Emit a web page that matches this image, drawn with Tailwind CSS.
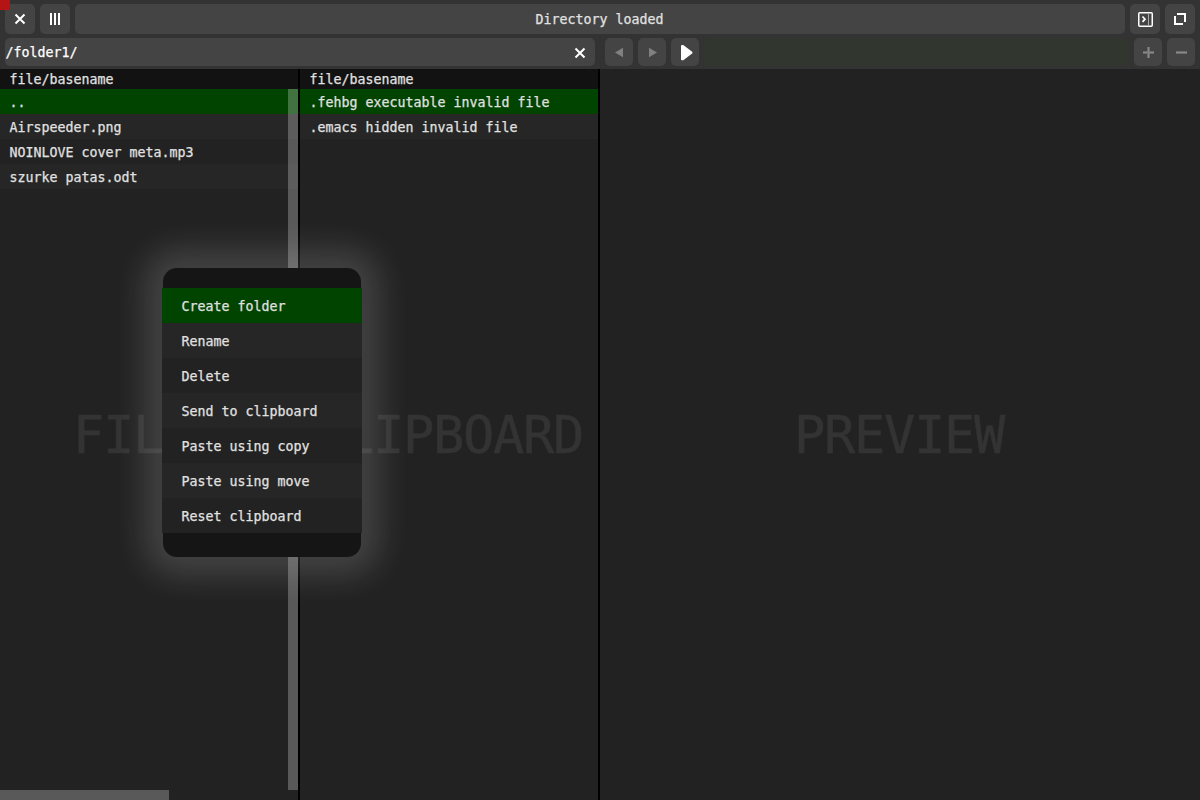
<!DOCTYPE html>
<html lang="en">
<head>
<meta charset="utf-8">
<title>File browser</title>
<script src="https://cdn.jsdelivr.net/npm/@tailwindcss/browser@4"></script>
</head>
<body class="h-[800px] w-[1200px] overflow-hidden bg-[#222] font-['DejaVu_Sans_Mono',monospace] text-[13.29px] text-[#e1e1e1] [-webkit-text-stroke:0.25px_currentColor]">
<div class="relative flex h-full flex-col">
  <header class="flex h-[69px] shrink-0 flex-col gap-1 bg-[#333] px-[5px] pt-1">
    <div class="flex h-[30px] gap-[5px]">
      <div class="w-[30px] rounded-[5px] bg-[#444]"><svg width="30" height="30" fill="none" stroke="#fff" stroke-width="2"><path d="M10.500 10.500l9 9M19.500 10.500l-9 9"/></svg></div>
      <div class="w-[30px] rounded-[5px] bg-[#444]"><svg width="30" height="30" fill="#fff"><path d="M10 9h2v12h-2zM14 9h2v12h-2zM18 9h2v12h-2z"/></svg></div>
      <div class="flex-1 rounded-[5px] bg-[#444] pr-px text-center leading-[31px] whitespace-nowrap">Directory loaded</div>
      <div class="w-[30px] rounded-[5px] bg-[#444]"><svg width="30" height="30" fill="none" stroke="#fff"><rect x="8.750" y="8.750" width="13.500" height="13.500" rx="1" stroke-width="1.500"/><path d="M18.500 9.500v12" stroke="#aaa"/><path d="M12.500 12.500l2.500 2.700-2.500 2.700" stroke-width="1.700"/></svg></div>
      <div class="w-[30px] rounded-[5px] bg-[#444]"><svg width="30" height="30" fill="none" stroke="#fff" stroke-width="2"><path d="M12 10h8v8M10 12v8h8"/></svg></div>
    </div>
    <div class="flex h-7 gap-[5px]">
      <div class="mr-[5px] flex w-[590px] justify-between rounded-[5px] bg-[#444] leading-[29px] text-white"><span class="pl-[0.5px]">/folder1/</span><svg width="30" height="28" fill="none" stroke="#fff" stroke-width="2"><path d="M10.500 10.500l9 9M19.500 10.500l-9 9"/></svg></div>
      <div class="w-7 rounded-[5px] bg-[#444]"><svg width="28" height="28" fill="#808080"><path d="M10 14.500L18 9.700v9.600z"/></svg></div>
      <div class="w-7 rounded-[5px] bg-[#444]"><svg width="28" height="28" fill="#808080"><path d="M11 9.700v9.600l8-4.800z"/></svg></div>
      <div class="w-7 rounded-[5px] bg-[#444]"><svg width="28" height="28" fill="#fff" stroke="#fff" stroke-linejoin="round" stroke-width="2"><path d="M11 8v13.200l1 0L20.500 14.600L12 8z"/></svg></div>
      <div class="flex-1 rounded-[5px] bg-[#31362f]"></div>
      <div class="w-7 rounded-[5px] bg-[#444]"><svg width="28" height="28" fill="#6c6c6c"><path d="M9 13h4V9h3v4h4v3h-4v4h-3v-4H9z"/><path d="M9 14h11v1H9zM14 9h1v11h-1z" fill="#888"/></svg></div>
      <div class="w-7 rounded-[5px] bg-[#444]"><svg width="28" height="28" fill="#6c6c6c"><path d="M9 13h11v3H9z"/><path d="M9 14h11v1H9z" fill="#888"/></svg></div>
    </div>
  </header>
  <main class="flex min-h-0 flex-1">
    <section class="relative w-[300px] border-r-2 border-black">
      <div class="absolute top-[335px] left-[73px] w-[155px] text-[52px] leading-[62px] tracking-[-1.31px] text-[#333] [-webkit-text-stroke:0.5px_#333]">FILES</div>
      <div class="h-5 bg-[#121212] pl-[9.5px] leading-[21px]">file/basename</div>
      <div class="leading-[27px] whitespace-nowrap">
        <div class="h-[25px] bg-[#040] pl-[9.5px]">..</div>
        <div class="h-[25px] bg-[#262626] pl-[9.5px]">Airspeeder.png</div>
        <div class="h-[25px] pl-[9.5px]">NOINLOVE cover meta.mp3</div>
        <div class="h-[25px] bg-[#262626] pl-[9.5px]">szurke patas.odt</div>
      </div>
      <div class="absolute top-5 right-0 bottom-[10px] w-[10px] bg-white/25"></div>
      <div class="absolute bottom-0 left-0 h-[10px] w-[169px] bg-white/25"></div>
    </section>
    <section class="relative w-[300px] border-r-2 border-black">
      <div class="absolute top-[335px] left-[13px] w-[280px] text-[52px] leading-[62px] tracking-[-1.31px] text-[#333] [-webkit-text-stroke:0.5px_#333]">CLIPBOARD</div>
      <div class="h-5 bg-[#121212] pl-[9.5px] leading-[21px]">file/basename</div>
      <div class="leading-[27px] whitespace-nowrap">
        <div class="h-[25px] bg-[#040] pl-[9.5px]">.fehbg executable invalid file</div>
        <div class="h-[25px] bg-[#262626] pl-[9.5px]">.emacs hidden invalid file</div>
      </div>
    </section>
    <section class="flex-1 pt-[335px] pl-[194px] text-[52px] leading-[62px] tracking-[-1.31px] text-[#333] [-webkit-text-stroke:0.5px_#333]">PREVIEW</section>
  </main>
  <div class="absolute top-0 left-0 size-[10px] bg-[#b41414]"></div>
  <div class="absolute top-[268px] left-[162px] w-[200px] leading-[37px] whitespace-nowrap">
    <div class="absolute inset-x-px inset-y-0 rounded-[14px] bg-[#151515] shadow-[0_0_32px_19px_rgba(255,255,255,0.15)]"></div>
    <div class="relative pt-5 pb-6">
      <div class="h-[35px] bg-[#040] pl-[19.5px]">Create folder</div>
      <div class="h-[35px] bg-[#262626] pl-[19.5px]">Rename</div>
      <div class="h-[35px] bg-[#222] pl-[19.5px]">Delete</div>
      <div class="h-[35px] bg-[#262626] pl-[19.5px]">Send to clipboard</div>
      <div class="h-[35px] bg-[#222] pl-[19.5px]">Paste using copy</div>
      <div class="h-[35px] bg-[#262626] pl-[19.5px]">Paste using move</div>
      <div class="h-[35px] bg-[#222] pl-[19.5px]">Reset clipboard</div>
    </div>
  </div>
</div>
</body>
</html>
